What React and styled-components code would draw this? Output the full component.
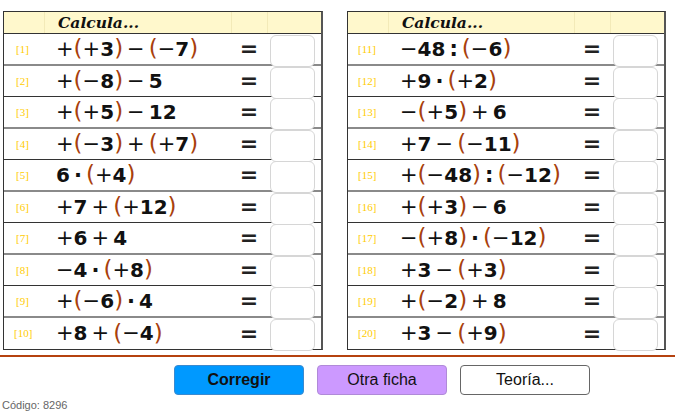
import React from "react";
import styled, { createGlobalStyle } from "styled-components";

const GlobalStyle = createGlobalStyle`
  body {
    margin: 0;
    background: #fff;
    font-family: "Liberation Sans", Arial, sans-serif;
  }
`;

const Page = styled.div`
  width: 675px;
  height: 417px;
  padding-top: 11px;
  box-sizing: border-box;
  position: relative;
`;

const Tables = styled.div`
  display: flex;
  gap: 24px;
  padding-left: 3px;
`;

const Table = styled.div`
  width: ${(p) => p.$width}px;
  border: 1px solid #333;
  border-right: 2px solid #555;
  box-sizing: border-box;
`;

const Grid = styled.div`
  display: grid;
  grid-template-columns: 40px 1fr 36px 45px;
  padding-right: 9px;
  column-gap: 0;
`;

const HeaderRow = styled(Grid)`
  height: 21px;
  background: #fff8cc;
  border-bottom: 1px solid #333;
  padding-right: 0;
  grid-template-columns: 40px 1fr 36px 54px;
`;

const HeaderCell = styled.div`
  border-left: ${(p) => (p.$first ? "none" : "1px solid #f3eab8")};
  display: flex;
  align-items: center;
  padding-left: 13px;
  font-family: "DejaVu Serif", "Liberation Serif", serif;
  font-style: italic;
  font-weight: 600;
  font-size: 15.5px;
  color: #111;
`;

const Row = styled(Grid)`
  height: 31.5px;
  box-sizing: border-box;
  border-bottom: ${(p) => (p.$last ? "none" : p.$odd ? "2px solid #8a8a8a" : "1px solid #333")};
  align-items: center;
`;

const Label = styled.span`
  font-family: "Liberation Serif", serif;
  font-size: 11px;
  color: #ffcc00;
  padding-left: ${(p) => (p.$wide ? 10 : 12)}px;
`;

const Expr = styled.div`
  display: flex;
  align-items: center;
  padding-left: 12px;
  font-family: "DejaVu Sans", sans-serif;
  font-size: 20px;
  color: #111;
  white-space: nowrap;
`;

const Digit = styled.span`
  font-weight: bold;
`;

const Op = styled.span`
  font-weight: normal;
  font-size: 21px;
  margin: 0 ${(p) => (p.$binary ? 4 : 0)}px;
`;

const Paren = styled.span`
  color: #a8400c;
  font-weight: normal;
  font-size: 23px;
  line-height: 1;
`;

const Eq = styled.span`
  text-align: center;
  font-family: "DejaVu Sans", sans-serif;
  font-size: 22px;
  font-weight: bold;
  color: #222;
`;

const BoxCell = styled.div`
  align-self: start;
  position: relative;
  height: 100%;
  padding-left: 3px;
`;

const InputBox = styled.div`
  position: absolute;
  top: 1px;
  left: 3px;
  width: 45px;
  height: 32px;
  box-sizing: border-box;
  border: 1px solid #d6d6d6;
  border-radius: 6px;
  background: #fff;
  z-index: 1;
`;

const Rule = styled.div`
  height: 2px;
  background: #b5420f;
  margin-top: 5px;
`;

const Buttons = styled.div`
  display: flex;
  gap: 13px;
  padding-left: 174px;
  margin-top: 8px;
`;

const Button = styled.button`
  width: 130px;
  height: 30px;
  border-radius: 4px;
  font-family: "Liberation Sans Narrow", "Arial Narrow", "Liberation Sans", sans-serif;
  font-size: 16px;
  color: #111;
  cursor: pointer;
  font-weight: ${(p) => (p.$bold ? "bold" : "normal")};
  background: ${(p) => p.$bg};
  border: 1px solid ${(p) => p.$border};
`;

const Code = styled.div`
  position: absolute;
  left: 2px;
  bottom: 6px;
  font-size: 11px;
  color: #666;
`;

const left = [
  "+(+3) − (−7)",
  "+(−8) − 5",
  "+(+5) − 12",
  "+(−3) + (+7)",
  "6 · (+4)",
  "+7 + (+12)",
  "+6 + 4",
  "−4 · (+8)",
  "+(−6) · 4",
  "+8 + (−4)",
];

const right = [
  "−48 : (−6)",
  "+9 · (+2)",
  "−(+5) + 6",
  "+7 − (−11)",
  "+(−48) : (−12)",
  "+(+3) − 6",
  "−(+8) · (−12)",
  "+3 − (+3)",
  "+(−2) + 8",
  "+3 − (+9)",
];

// digits bold, signs thin, brackets brown
const renderExpr = (s) => {
  const out = [];
  for (let i = 0; i < s.length; i++) {
    const c = s[i];
    if (c === " ") continue;
    const binary = s[i - 1] === " " && s[i + 1] === " ";
    if (c === "(" || c === ")") out.push(<Paren key={i}>{c}</Paren>);
    else if (/[0-9]/.test(c)) out.push(<Digit key={i}>{c}</Digit>);
    else if (c === "·" || c === ":") out.push(<Op key={i} $binary><Digit>{c}</Digit></Op>);
    else out.push(<Op key={i} $binary={binary}>{c}</Op>);
  }
  return out;
};

const Sheet = ({ width, items, start }) => (
  <Table $width={width}>
    <HeaderRow>
      <HeaderCell $first />
      <HeaderCell>Calcula...</HeaderCell>
      <HeaderCell />
      <HeaderCell />
    </HeaderRow>
    {items.map((e, i) => (
      <Row key={i} $odd={i % 2 === 0} $last={i === items.length - 1}>
        <Label $wide={start + i >= 10}>[{start + i}]</Label>
        <Expr>{renderExpr(e)}</Expr>
        <Eq>=</Eq>
        <BoxCell>
          <InputBox />
        </BoxCell>
      </Row>
    ))}
  </Table>
);

export default function App() {
  return (
    <Page>
      <GlobalStyle />
      <Tables>
        <Sheet width={320} items={left} start={1} />
        <Sheet width={319} items={right} start={11} />
      </Tables>
      <Rule />
      <Buttons>
        <Button $bold $bg="#0099ff" $border="#3a8ad0">Corregir</Button>
        <Button $bg="#cc99ff" $border="#b08ad8">Otra ficha</Button>
        <Button $bg="#fff" $border="#666">Teoría...</Button>
      </Buttons>
      <Code>Código: 8296</Code>
    </Page>
  );
}
